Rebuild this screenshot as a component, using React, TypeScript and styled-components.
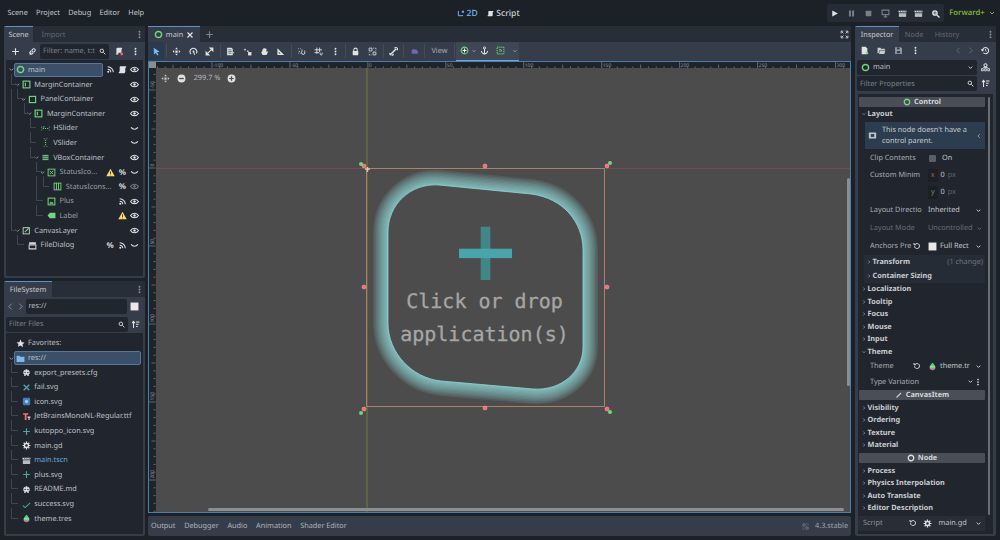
import React from 'react'
import styled, { createGlobalStyle } from 'styled-components'

const GlobalStyle = createGlobalStyle`
  html, body { margin: 0; padding: 0; background: #1c2027; }
  body { font-family: "Noto Sans", "Open Sans", sans-serif; font-size: 7.3px; color: #c6c9ce; text-rendering: geometricPrecision; }
  * { box-sizing: border-box; }
`

const TEAL = '#4aa8a8'
const GREEN = '#70d97d'
const BLUE = '#70bafa'

const ICONS: Record<string, React.ReactNode> = {
  ring: <circle cx="8" cy="8" r="5.5" strokeWidth="2.6" />,
  margin: <><rect x="2" y="2" width="12" height="12" /><path d="M6 5v6" /></>,
  panel: <rect x="2.5" y="2.5" width="11" height="11" />,
  hslider: <path d="M1 5v1m0 4v1M15 5v1m0 4v1M3 8h2m2 0h2m2 0h2M5 4v2" strokeWidth="2" />,
  vslider: <path d="M5 1h1m4 0h1M5 15h1m4 0h1M8 3v2m0 2v2m0 2v2" strokeWidth="2" />,
  vbox: <path d="M2 3h12v10H2zM2 6.5h12M2 9.5h12" fill="currentColor" stroke="#21262e" strokeWidth="1.2" />,
  center: <><rect x="2" y="2" width="12" height="12" strokeWidth="1.6" /><path d="M5 5l6 6M11 5l-6 6" strokeWidth="1.6" /></>,
  grid: <><rect x="2" y="2" width="12" height="12" strokeWidth="1.6" /><path d="M6.2 2v12M9.8 2v12" strokeWidth="1.6" /></>,
  texture: <><rect x="2" y="2" width="12" height="12" strokeWidth="1.8" /><path d="M4 12l3-4 2 2 1-1 2 3z" fill="currentColor" stroke="none" /></>,
  label: <path d="M1 8l4-5h10v10H5z" fill="currentColor" stroke="none" />,
  canvas: <><rect x="2" y="3" width="11" height="11" strokeWidth="1.5" /><path d="M5 11l8-8" stroke="#70d97d" strokeWidth="2" /></>,
  window: <><path d="M2 2h12v4H2z" fill="currentColor" stroke="none" /><path d="M2 7h12v7H2z" strokeWidth="1.8" /></>,
  eye: <><path d="M1 8c3-5.6 11-5.6 14 0-3 5.6-11 5.6-14 0z" strokeWidth="1.8" /><circle cx="8" cy="8" r="2.2" fill="currentColor" stroke="none" /></>,
  eyeOff: <path d="M2 6c3 4.5 9 4.5 12 0" strokeWidth="2" />,
  signal: <><path d="M3 3c5.5 0 10 4.500 10 10M3 7.500c3 0 5.500 2.500 5.500 5.500" strokeWidth="1.8" /><circle cx="4" cy="12" r="1.800" fill="currentColor" stroke="none" /></>,
  script: <path d="M5 2h9c1 0 1 3-1 3v6c0 3-1 3.500-3 3.500H2c-1 0-1-3 1-3V4c0-1.500 1-2 2-2z" fill="currentColor" stroke="none" />,
  warn: <><path d="M8 1.500L15.500 14.500H.5z" fill="#ffdd65" stroke="none" /><path d="M8 6v4.500M8 11.800v1.200" stroke="#21262e" strokeWidth="1.500" /></>,
  search: <><circle cx="6.500" cy="6.500" r="4" strokeWidth="2" /><path d="M10 10l4.500 4.500" strokeWidth="2.200" /></>,
  sort: <path d="M4.500 14V3M2 5.500L4.500 2.500 7 5.500M9 3.500h6M9 7.500h4.500M9 11.500h3" strokeWidth="1.800" />,
  dots: <g fill="currentColor" stroke="none"><circle cx="8" cy="3" r="1.700" /><circle cx="8" cy="8" r="1.700" /><circle cx="8" cy="13" r="1.700" /></g>,
  plus: <path d="M8 2v12M2 8h12" strokeWidth="2" />,
  close: <path d="M3 3l10 10M13 3L3 13" strokeWidth="2.400" />,
  down: <path d="M4 6l4 4 4-4" strokeWidth="2" />,
  right: <path d="M6 4l4 4-4 4" strokeWidth="2" />,
  left: <path d="M10 3L5 8l5 5" strokeWidth="1.500" />,
  fwd: <path d="M6 3l5 5-5 5" strokeWidth="1.500" />,
  link: <path d="M3 13l3-3M6 6.500L3.500 9c-1.500 2 1.500 5 3.500 3.500l2.500-2.500M10 9.500L12.500 7c1.500-2-1.500-5-3.500-3.500L6.500 6M7 9l2-2" strokeWidth="1.800" />,
  addScript: <><path d="M4 1.500h8c1 0 1 2.500-.5 2.500v6H6v3.500H2c-.8 0-.8-2 .5-2V3c0-1 .7-1.500 1.500-1.500z" fill="currentColor" stroke="none" /><circle cx="12" cy="12.500" r="2.500" fill="#ff5f5f" stroke="none" /></>,
  star: <path d="M8 1l2.200 4.600 5 .7-3.600 3.500.9 5L8 11.500l-4.500 2.300.9-5L.8 6.300l5-.7z" fill="currentColor" stroke="none" />,
  folder: <path d="M1 3h5l1.500 2H15v9H1z" fill="currentColor" stroke="none" />,
  gear: <><circle cx="8" cy="8" r="3.700" strokeWidth="2.600" /><path d="M8 1v2.500M8 12.500V15M1 8h2.500M12.500 8H15M3 3l1.800 1.800M11.200 11.200L13 13M13 3l-1.800 1.800M4.800 11.200L3 13" strokeWidth="2.200" /></>,
  clapper: <><path d="M1 3h14v3H1z" fill="currentColor" stroke="none" /><path d="M1.500 7.500h13V14h-13z" fill="currentColor" stroke="none" opacity=".8" /><path d="M4 3l1.500 3M8 3l1.500 3M12 3l1.500 3" stroke="#21262e" strokeWidth="1.200" /></>,
  robot: <><path d="M2.500 6L4 3.500l2 .8L6.700 2h2.600l.7 2.300 2-.8L13.500 6v4.500H12V14H9.500v-2h-3v2H4v-3.500H2.500z" fill="currentColor" stroke="none" /><circle cx="5.500" cy="8" r="1.300" fill="#21262e" stroke="none" /><circle cx="10.500" cy="8" r="1.300" fill="#21262e" stroke="none" /></>,
  fontFile: <><path d="M2 2h9v3H8v9H5V5H2z" fill="#ff6f6f" stroke="none" /><path d="M10 8h5v2h-1.500v4h-2v-4H10z" fill="#e0e0e0" stroke="none" /></>,
  check: <path d="M1.500 10l4 3.500L14.500 5" strokeWidth="1.800" />,
  imageBlue: <><rect x="1.500" y="1.500" width="13" height="13" rx="2" fill="#3f7fb8" stroke="none" /><circle cx="8" cy="8" r="3" fill="#9cc8ee" stroke="none" /></>,
  drop: <><path d="M8 1.500c2.500 2.500 5 5 5 8a5 5 0 0 1-10 0c0-3 2.500-5.500 5-8z" fill="#45d7a0" stroke="none" /><path d="M3.200 8h9.600l.2 1.500H3z" fill="#ffdd55" stroke="none" /><path d="M3 10.500h10l-.4 1.600H3.400z" fill="#ff6a6a" stroke="none" /><path d="M4 12.800h8l-1.500 1.500h-5z" fill="#c44eff" stroke="none" /></>,
  expand: <path d="M2 6V2h4M10 2h4v4M14 10v4h-4M6 14H2v-4M3 3l3 3M13 3l-3 3M13 13l-3-3M3 13l3-3" strokeWidth="1.500" />,
  arrow: <path d="M3 1.500l10.500 7-4.500.8 2.500 4.500-2.200 1.200-2.500-4.500L3.500 13.500z" fill="currentColor" stroke="none" />,
  move: <path d="M8 1L5.500 4h5zM8 15l-2.500-3h5zM1 8l3-2.500v5zM15 8l-3-2.500v5zM6 6h4v4H6z" fill="currentColor" stroke="none" />,
  rotate: <><path d="M3.500 12.500A6 6 0 1 1 13 11.500" strokeWidth="1.900" /><circle cx="8" cy="8" r="1.800" fill="currentColor" stroke="none" /><path d="M8 8l2 6" strokeWidth="1.800" /></>,
  scale: <path d="M9 2h5v5zM2 14V9l5 5zM11 5L5 11" fill="currentColor" strokeWidth="1.800" />,
  listDoc: <><path d="M2 1.500h8L12 3.500v11H2z" fill="currentColor" stroke="none" /><path d="M4 5h6M4 8h6M4 11h6" stroke="#363d4a" strokeWidth="1.200" /><path d="M12 8l3 3h-3z" fill="currentColor" stroke="none" /></>,
  pivot: <><path d="M2 3h3v3H2zM7 6h3v3H7z" fill="currentColor" stroke="none" opacity=".8" /><path d="M9 9h6v6H9z" fill="currentColor" stroke="none" /></>,
  hand: <path d="M4 8V4.500h1.500V7V2.800H7.500V7V2H9.500v5V3.200H11.500v6L13 7.500 14.500 8.500 11.500 14H4.500L2 9.500 3 8.500z" fill="currentColor" stroke="none" />,
  ruler: <path d="M2.500 2v12h12zM5 8.500V11.500h3z" fill="currentColor" fillRule="evenodd" stroke="none" />,
  magnet: <path d="M2 3h1M6 3h1M9 4.500c0 3-1 5-1 6 0 3.500 6 3.500 6 0 0-1.500-.5-3-.5-4M4 7v2M2 11h1M6 11h1" strokeWidth="1.700" />,
  gridSnap: <path d="M5 1v11M10 1v8M1 5h13M1 10h8M11 10v2c0 3 3.500 3 3.500 0v-2" strokeWidth="1.600" />,
  lock: <><rect x="3" y="7" width="10" height="7.500" rx="1" fill="currentColor" stroke="none" /><path d="M5 7V5a3 3 0 0 1 6 0v2" strokeWidth="1.900" /></>,
  group: <path d="M2 2h5v5H2zM9 9h5v5H9zM9 2h2m2 0h1v2M14 6v1M2 9v1M2 13v1h2M6 14h1" strokeWidth="1.500" />,
  bone: <path d="M3 13l10-10M2 11c-1 2 1 3 1.500 2.500M5 14c2 1 2.500-1 2-1.500M11 2c-1-1 2-1.500 2.500-.500M14 5c1 0 1.500-2.500.5-3" strokeWidth="2.600" />,
  blob: <path d="M3 6l3-3 2 2 3-1 3 4v4H3z" fill="currentColor" stroke="none" />,
  addNode: <><circle cx="8" cy="8" r="6" strokeWidth="1.900" /><path d="M8 4.500v7M4.500 8h7" stroke="#fff" strokeWidth="1.700" /></>,
  zoomOut: <><circle cx="8" cy="8" r="7" fill="currentColor" stroke="none" /><path d="M4 8h8" stroke="#4c4c4c" strokeWidth="2.400" /></>,
  zoomIn: <><circle cx="8" cy="8" r="7" fill="currentColor" stroke="none" /><path d="M4 8h8M8 4v8" stroke="#4c4c4c" strokeWidth="2.200" /></>,
  anchor: <><circle cx="8" cy="3.500" r="2" strokeWidth="1.600" /><path d="M8 5v9M2.500 9c0 3 3 5 5.500 5s5.500-2 5.500-5" strokeWidth="1.800" /></>,
  layout: <path d="M2 2h12v12H2zM6.500 6.500h3v3h-3z" strokeWidth="1.700" strokeDasharray="2.500 1.200" />,
  mode2d: <path d="M3 3v10h10M13 13v-1.500M3 3h1.500M12 2.500h3v3h-3z" strokeWidth="2.200" />,
  play: <path d="M4 2.500l10 5.500-10 5.500z" fill="currentColor" stroke="none" />,
  pause: <path d="M3.500 2.500h3.500v11H3.500zM9 2.500h3.500v11H9z" fill="currentColor" stroke="none" />,
  stop: <rect x="3" y="3" width="10" height="10" rx="1" fill="currentColor" stroke="none" />,
  remote: <path d="M2 2h12v8H2zM8 10v4M5 14h6" strokeWidth="2" />,
  movieMag: <><circle cx="7" cy="7" r="5" fill="currentColor" stroke="none" /><path d="M10.500 10.500L15 15" strokeWidth="2.400" /><path d="M4 7h6M7 4v6" stroke="#262c36" strokeWidth="1.100" /></>,
  history: <><path d="M4 12a5.500 5.500 0 1 0-1.500-4M.5 6L2.500 8.500 5 6.500" strokeWidth="1.800" /><path d="M8 5v3.500l2 1" strokeWidth="1.500" /></>,
  undo: <path d="M4.500 4.500A5 5 0 1 1 3 8.500M2 2v3.500h3.500" strokeWidth="2" />,
  newRes: <><path d="M3 1.500h7l3 3v10H3z" fill="currentColor" stroke="none" /><circle cx="12.500" cy="12.500" r="2.300" fill="#70d97d" stroke="none" /></>,
  openFolder: <path d="M1 3h5l1.500 2H14v2H5L3 13H1zM5.500 8H15l-2 6H3.500z" fill="currentColor" stroke="none" />,
  save: <><path d="M2 2h10l2 2v10H2z" fill="currentColor" stroke="none" /><path d="M5 2.500h5v3.500H5zM5 9h6v4H5z" fill="#363d4a" stroke="none" /></>,
  pinNode: <><circle cx="8" cy="4" r="2.800" strokeWidth="1.800" /><path d="M1 10h3v4H1zM6.500 10h3v4h-3zM12 10h3v4h-3zM4 8h8" strokeWidth="1.500" /></>,
  infoNode: <><rect x="1.500" y="2.500" width="13" height="11" rx="1.500" fill="#c0c4ca" stroke="none" /><rect x="5" y="5.500" width="6" height="5" fill="#2c3e50" stroke="none" /></>,
  pencil: <path d="M3 13l9-9" strokeWidth="2.600" />,
  swatch: <rect x="1" y="1" width="14" height="14" fill="#e8e8e8" stroke="none" />,
}

const IconSvg = styled.svg<{ $size: number; $color: string; $dim?: boolean }>`
  width: ${p => p.$size}px;
  height: ${p => p.$size}px;
  flex: none;
  color: ${p => p.$color};
  opacity: ${p => (p.$dim ? 0.45 : 1)};
  fill: none;
  stroke: currentColor;
  stroke-width: 2;
`

const Icon = ({ name, size = 9, color = '#e0e2e5', dim }: { name: string; size?: number; color?: string; dim?: boolean }) => (
  <IconSvg viewBox="0 0 16 16" $size={size} $color={color} $dim={dim}>
    {ICONS[name]}
  </IconSvg>
)

const Root = styled.div`
  width: 1000px;
  height: 540px;
  overflow: hidden;
  display: flex;
  flex-direction: column;
  background: #1c2027;
`

const MenuBar = styled.div`
  height: 26px;
  flex: none;
  display: flex;
  align-items: center;
  padding: 0 4px;
`

const MenuItems = styled.div`
  display: flex;
  width: 432px;
  gap: 8.300px;
  padding-left: 3.500px;
`

const ModeSwitch = styled.div`
  display: flex;
  align-items: center;
  gap: 9px;
  width: 364px;
  padding-left: 21px;
`

const Mode = styled.span<{ $active?: boolean }>`
  display: flex;
  align-items: center;
  gap: 2.500px;
  font-size: 8.600px;
  font-weight: 500;
  color: ${p => (p.$active ? BLUE : '#d0d3d7')};
`

const PlayGroup = styled.div`
  display: flex;
  align-items: center;
  height: 18px;
  background: #262c36;
  border-radius: 2px;
  margin-left: 26.600px;
`

const Renderer = styled.span`
  display: flex;
  align-items: center;
  gap: 3px;
  margin-left: 5px;
  font-size: 7.700px;
  color: #7fb02e;
  font-weight: 600;
`

const Workspace = styled.div`
  height: 510px;
  flex: none;
  display: flex;
  padding: 0 4px;
`

const Dock = styled.div`
  width: 141px;
  flex: none;
  display: flex;
  flex-direction: column;
  gap: 3px;
`

const Panel = styled.section<{ $height: number }>`
  height: ${p => p.$height}px;
  flex: none;
  display: flex;
  flex-direction: column;
  background: #363d4a;
  border-radius: 2px;
  overflow: hidden;
`

const TabBar = styled.div`
  height: 16px;
  flex: none;
  display: flex;
  align-items: stretch;
  background: #282e38;
  padding-right: 1px;
`

const Tab = styled.div<{ $active?: boolean; $width: number }>`
  width: ${p => p.$width}px;
  flex: none;
  display: flex;
  align-items: center;
  justify-content: center;
  gap: 3px;
  color: ${p => (p.$active ? '#c6c9ce' : '#626874')};
  background: ${p => (p.$active ? '#363d4a' : 'transparent')};
  border-top: 1px solid ${p => (p.$active ? '#5d93c4' : 'transparent')};
`

const PushRight = styled.div`
  margin-left: auto;
  display: flex;
  align-items: center;
`

const ToolRow = styled.div<{ $height?: number; $gap?: number; $pad?: number }>`
  height: ${p => p.$height ?? 18}px;
  flex: none;
  display: flex;
  align-items: center;
  gap: ${p => p.$gap ?? 0}px;
  padding: 0 ${p => p.$pad ?? 2}px;
`

const IconSlot = styled.span<{ $width?: number }>`
  width: ${p => p.$width ?? 17}px;
  flex: none;
  display: flex;
  align-items: center;
  justify-content: center;
`

const Field = styled.div<{ $width: number; $dim?: boolean }>`
  width: ${p => p.$width}px;
  height: 15px;
  flex: none;
  display: flex;
  align-items: center;
  justify-content: space-between;
  padding: 0 3px;
  background: #21262e;
  border-radius: 2px;
  color: ${p => (p.$dim ? '#7c828c' : '#b9bcc2')};
  overflow: hidden;
  white-space: nowrap;
`

const TreeBox = styled.div<{ $top: number }>`
  flex: 1;
  margin: 0 2px 2px;
  padding-top: ${p => p.$top}px;
  background: #21262e;
  border-radius: 1px;
  overflow: hidden;
`

const Row = styled.div<{ $depth: number; $up: number }>`
  position: relative;
  height: 14.600px;
  display: flex;
  align-items: center;
  padding-left: ${p => 1 + p.$depth * 6.3}px;

  &::before {
    content: '';
    display: ${p => (p.$up ? 'block' : 'none')};
    position: absolute;
    left: ${p => 5 + (p.$depth - 1) * 6.3}px;
    bottom: 7.300px;
    width: 5.500px;
    height: ${p => p.$up * 14.6 - 5}px;
    border-left: 1px solid #3f4651;
    border-bottom: 1px solid #3f4651;
  }
`

const Arrow = styled.span`
  width: 8px;
  flex: none;
  display: flex;
  justify-content: center;
`

const NameCell = styled.div<{ $selected?: boolean; $width?: number }>`
  width: ${p => (p.$width ? `${p.$width}px` : 'auto')};
  height: 14px;
  display: flex;
  align-items: center;
  gap: 3.500px;
  padding-left: 0.500px;
  white-space: nowrap;
  ${p => p.$selected && 'background: #3a5068; border: 1px solid #587896; border-radius: 2px; margin-left: -1px;'}
`

const NodeName = styled.span<{ $dim?: boolean; $link?: boolean }>`
  color: ${p => (p.$link ? '#6fa9de' : p.$dim ? '#9a9ea5' : '#bcc0c6')};
`

const RowIcons = styled.div`
  margin-left: auto;
  display: flex;
  align-items: center;
  gap: 3.200px;
  padding-right: 4px;
`

const Percent = styled.span`
  width: 9px;
  text-align: center;
  font-size: 8px;
  font-weight: 700;
  color: #d8dade;
`

const Center = styled.div`
  width: 703px;
  flex: none;
  margin: 0 4px 0 3px;
  display: flex;
  flex-direction: column;
`

const ToolBtn = styled.span<{ $active?: boolean; $width?: number }>`
  width: ${p => p.$width ?? 16.7}px;
  height: 18px;
  flex: none;
  display: flex;
  align-items: center;
  justify-content: center;
  border-radius: 2px;
  ${p => p.$active && 'background: #2a3b4d;'}
`

const Sep = styled.span`
  width: 1px;
  height: 14px;
  flex: none;
  margin: 0 1.600px;
  background: #454c59;
`

const ViewLabel = styled.span`
  width: 25px;
  flex: none;
  text-align: center;
  color: #a9adb3;
`

const SnapGroup = styled.div`
  height: 100%;
  display: flex;
  align-items: center;
  padding-left: 3px;
  background: #3f4654;
  border-bottom: 1px solid #6aa6da;
`

const EditorToolbar = styled.div`
  height: 18.500px;
  flex: none;
  display: flex;
  align-items: center;
  background: #363d4a;
`

const CanvasFrame = styled.div`
  flex: 1;
  min-height: 0;
  display: grid;
  grid-template-columns: 6.500px 1fr;
  grid-template-rows: 6.500px 1fr;
  border: 1px solid #4b80ad;
  background: #1f242b;
`

const Corner = styled.div`
  background: #8a8e94;
`

const RulerSvg = styled.svg`
  display: block;
  width: 100%;
  height: 100%;
`

const RulerText = styled.text`
  font-size: 5px;
  fill: #8f939a;
`

const Stage = styled.div`
  position: relative;
  background: #4c4c4c;
  overflow: hidden;
`

const StageSvg = styled.svg`
  position: absolute;
  left: 0;
  top: 0;
  width: 695px;
  height: 444px;
`

const ZoomControls = styled.div`
  position: absolute;
  left: 4px;
  top: 5px;
  display: flex;
  align-items: center;
  color: #b6b8bb;
`

const ZoomValue = styled.span`
  width: 31px;
  text-align: center;
`

const DropText = styled.div`
  position: absolute;
  left: 0;
  top: 216.500px;
  width: 658px;
  text-align: center;
  font-family: "DejaVu Sans Mono", "Liberation Mono", monospace;
  font-size: 20px;
  line-height: 33px;
  color: #a6a6a6;
  -webkit-text-stroke: 0.3px #a6a6a6;
`

const ScrollV = styled.div`
  position: absolute;
  right: 0;
  top: 110px;
  width: 3px;
  height: 208px;
  background: #8b8e92;
  border-radius: 2px;
`

const ScrollH = styled.div`
  position: absolute;
  left: 52px;
  right: 6px;
  bottom: 1px;
  height: 3px;
  background: #8b8e92;
  border-radius: 2px;
`

const BottomBar = styled.div`
  height: 20px;
  flex: none;
  margin-top: 3px;
  display: flex;
  align-items: center;
  gap: 8.700px;
  padding: 0 3px;
  background: #363d4a;
  border-radius: 2px;
  color: #b0b4ba;
`

const Version = styled.span`
  margin-left: auto;
  display: flex;
  align-items: center;
  gap: 6px;
  color: #a0a4aa;
`

const Inspector = styled.div`
  flex: 1;
  min-height: 0;
  position: relative;
  margin: 2px 3px 2px;
  padding: 2.500px 8px 0 1px;
  background: #21262e;
`

const Thumb = styled.div`
  position: absolute;
  right: 3px;
  top: 3px;
  width: 2.500px;
  height: 418px;
  border-radius: 1px;
  background: #6a6e75;
`

const Category = styled.div<{ $top?: number }>`
  height: 10px;
  margin-top: ${p => p.$top ?? 0}px;
  margin-bottom: 1.300px;
  display: flex;
  align-items: center;
  justify-content: center;
  gap: 3px;
  background: #494e57;
  font-weight: 700;
  color: #d4d6da;
  border-radius: 1px;
`

const Section = styled.div<{ $nested?: boolean; $height?: number }>`
  height: ${p => p.$height ?? 12.5}px;
  display: flex;
  align-items: center;
  gap: 0.500px;
  padding-left: 2px;
  padding-right: 2px;
  font-weight: 700;
  color: #c9ccd1;
  ${p => p.$nested && 'background: #262c35; margin-left: 5px;'}
`

const ChangeNote = styled.span`
  margin-left: auto;
  font-weight: 400;
  color: #6f747d;
`

const InfoBox = styled.div`
  height: 27px;
  margin: 1.500px 0 0 6px;
  display: flex;
  align-items: center;
  gap: 5px;
  padding: 0 3px 0 3px;
  background: #2b3d4f;
  color: #c9ccd1;
  line-height: 11px;
`

const Prop = styled.div<{ $height: number; $dim?: boolean }>`
  height: ${p => p.$height}px;
  display: grid;
  grid-template-columns: 58px 1fr;
  align-items: center;
  padding-left: 11px;
  color: ${p => (p.$dim ? '#686d76' : '#a9adb3')};
  white-space: nowrap;
`

const PropLabel = styled.div`
  display: flex;
  align-items: center;
  justify-content: space-between;
  padding-right: 7px;
  overflow: hidden;
`

const PropValue = styled.div<{ $dim?: boolean }>`
  display: flex;
  align-items: center;
  gap: 3px;
  padding-right: 3px;
  color: ${p => (p.$dim ? '#686d76' : '#c3c6cb')};
`

const PushEnd = styled.span`
  margin-left: auto;
  display: flex;
`

const Checkbox = styled.span`
  width: 7px;
  height: 7px;
  background: #5a5f68;
  border-radius: 1px;
  margin: 0 3px 0 1px;
`

const AxisTag = styled.span<{ $color: string }>`
  width: 9.500px;
  height: 13px;
  display: flex;
  align-items: center;
  justify-content: center;
  background: #1b1f26;
  color: ${p => p.$color};
`

const Unit = styled.span`
  color: #5d626b;
`

const ScriptRow = styled.div`
  position: absolute;
  left: 0;
  right: 8px;
  bottom: 3.500px;
  height: 15px;
  display: flex;
  align-items: center;
  padding-left: 5px;
  background: #282d36;
  color: #8e9299;
`

const ScriptValue = styled.div`
  margin-left: 26px;
  display: flex;
  align-items: center;
  gap: 3px;
  flex: 1;
  padding-right: 3px;
  color: #c3c6cb;
`

type TreeNode = {
  name: string
  depth: number
  up: number
  icon: string
  color?: string
  open?: boolean
  dim?: boolean
  badges: string[]
}

const SCENE_TREE: TreeNode[] = [
  { name: 'MarginContainer', depth: 1, up: 1, icon: 'margin', open: true, badges: ['eye'] },
  { name: 'PanelContainer', depth: 2, up: 1, icon: 'panel', open: true, badges: ['eye'] },
  { name: 'MarginContainer', depth: 3, up: 1, icon: 'margin', open: true, badges: ['eye'] },
  { name: 'HSlider', depth: 4, up: 1, icon: 'hslider', badges: ['eyeOff'] },
  { name: 'VSlider', depth: 4, up: 1, icon: 'vslider', badges: ['eyeOff'] },
  { name: 'VBoxContainer', depth: 4, up: 1, icon: 'vbox', open: true, badges: ['eye'] },
  { name: 'StatusIco...', depth: 5, up: 1, icon: 'center', open: true, dim: true, badges: ['warn', '%', 'eyeOff'] },
  { name: 'StatusIcons...', depth: 6, up: 1, icon: 'grid', dim: true, badges: ['%', 'eyeDim'] },
  { name: 'Plus', depth: 5, up: 2, icon: 'texture', dim: true, badges: ['signal', 'eye'] },
  { name: 'Label', depth: 5, up: 1, icon: 'label', dim: true, badges: ['warn', 'eye'] },
  { name: 'CanvasLayer', depth: 1, up: 10, icon: 'canvas', color: '#d8dade', open: true, badges: ['eye'] },
  { name: 'FileDialog', depth: 2, up: 1, icon: 'window', color: '#d8dade', badges: ['%', 'signal', 'eyeOff'] },
]

const FILES: { name: string; icon: string; color?: string; link?: boolean }[] = [
  { name: 'export_presets.cfg', icon: 'robot' },
  { name: 'fail.svg', icon: 'close', color: TEAL },
  { name: 'icon.svg', icon: 'imageBlue' },
  { name: 'JetBrainsMonoNL-Regular.ttf', icon: 'fontFile' },
  { name: 'kutoppo_icon.svg', icon: 'plus', color: TEAL },
  { name: 'main.gd', icon: 'gear' },
  { name: 'main.tscn', icon: 'clapper', link: true },
  { name: 'plus.svg', icon: 'plus', color: TEAL },
  { name: 'README.md', icon: 'robot' },
  { name: 'success.svg', icon: 'check', color: TEAL },
  { name: 'theme.tres', icon: 'drop' },
]

const Badge = ({ kind }: { kind: string }) => {
  if (kind === '%') return <Percent>%</Percent>
  if (kind === 'eyeDim') return <Icon name="eye" dim />
  return <Icon name={kind} />
}

const TOOL_GROUPS = [
  ['move', 'rotate', 'scale'],
  ['listDoc', 'pivot', 'hand', 'ruler'],
  ['magnet', 'gridSnap', 'dots'],
  ['lock', 'group'],
  ['bone'],
]

const PLAY_BUTTONS: { name: string; dim?: boolean }[] = [
  { name: 'play' },
  { name: 'pause', dim: true },
  { name: 'stop', dim: true },
  { name: 'remote', dim: true },
  { name: 'clapper' },
  { name: 'clapper' },
  { name: 'movieMag' },
]

const HORIZONTAL_TICKS = Array.from({ length: 90 }, (_, i) => i)
const RULER_LABELS = [-100, -50, 0, 50, 100, 150, 200, 250, 300]
const VERTICAL_LABELS = [-50, 0, 50, 100, 150, 200]

const HorizontalRuler = () => (
  <RulerSvg viewBox="155 61.500 695 6.500" preserveAspectRatio="none">
    {HORIZONTAL_TICKS.map(i => {
      const x = 211 + (i - 8) * 7.8
      const major = i % 10 === 8
      const mid = i % 5 === 3
      return <line key={i} x1={x} x2={x} y1={major ? 61.5 : mid ? 64 : 66} y2={68} stroke="#7f848b" strokeWidth="0.7" />
    })}
    {RULER_LABELS.map((v, i) => (
      <RulerText key={v} x={212 + i * 78} y={66}>
        {v}
      </RulerText>
    ))}
  </RulerSvg>
)

const VerticalRuler = () => (
  <RulerSvg viewBox="148.500 68 6.500 444" preserveAspectRatio="none">
    {HORIZONTAL_TICKS.slice(0, 60).map(i => {
      const y = 90 + (i - 3) * 7.8
      const major = i % 10 === 3
      const mid = i % 5 === 3
      return <line key={i} y1={y} y2={y} x1={major ? 148.5 : mid ? 151 : 153} x2={155} stroke="#7f848b" strokeWidth="0.7" />
    })}
    {VERTICAL_LABELS.map((v, i) => (
      <RulerText key={v} transform={`translate(153 ${88.5 + i * 78}) rotate(-90)`}>
        {v}
      </RulerText>
    ))}
  </RulerSvg>
)

const BLOB =
  'M438 185 L530 194 C562 198 582 222 582 250 L582 347 C582 372 560 391 532 389 L440 381 C411 378 387 353 387 323 L387 232 C387 204 410 183 438 185 Z'
// more strokes close to the edge, so the glow falls off instead of looking like a band
const GLOW_STEPS = Array.from({ length: 14 }, (_, i) => 30 * Math.pow((i + 1) / 14, 1.4))
const HANDLES = [
  [363, 166], [484, 166], [606, 166], [363, 287], [606, 287], [363, 409], [484, 408], [606, 409],
]
const ANCHORS = [
  [360, 164], [609, 163], [360, 413], [609, 412],
]

const CanvasDrawing = () => (
  <StageSvg viewBox="155 68 695 444">
    <line x1="155" x2="850" y1="168.500" y2="168.500" stroke="#7d4a4e" strokeWidth="0.8" />
    <line x1="366" x2="366" y1="68" y2="512" stroke="#6f7d33" strokeWidth="1" />
    {GLOW_STEPS.map(w => (
      <path key={w} d={BLOB} fill="none" stroke="#8fdcdc" strokeOpacity="0.11" strokeWidth={w} strokeLinejoin="round" />
    ))}
    <path d={BLOB} fill="#4c4c4c" stroke="#8ed6d6" strokeWidth="0.8" />
    <rect x="479.700" y="226.700" width="9.600" height="53.300" fill="#3f8789" />
    <rect x="458" y="248.700" width="53" height="9.400" fill="#48a6aa" />
    <rect x="365.500" y="168.500" width="238" height="238" fill="none" stroke="#b47d66" strokeWidth="1" />
    {HANDLES.map(([x, y]) => (
      <circle key={`${x}-${y}`} cx={x} cy={y} r="2" fill="#ff6b70" stroke="#f0b5b0" strokeWidth="0.5" />
    ))}
    {ANCHORS.map(([x, y]) => (
      <circle key={`${x}-${y}`} cx={x} cy={y} r="2" fill={GREEN} />
    ))}
    <path d="M364 169h5M366.500 167v5" stroke="#e8b9ae" strokeWidth="1.500" />
  </StageSvg>
)

const App = () => (
  <Root>
    <GlobalStyle />
    <MenuBar>
      <MenuItems>
        {['Scene', 'Project', 'Debug', 'Editor', 'Help'].map(m => (
          <span key={m}>{m}</span>
        ))}
      </MenuItems>
      <ModeSwitch>
        <Mode $active>
          <Icon name="mode2d" color={BLUE} size={7} />
          2D
        </Mode>
        <Mode>
          <Icon name="script" size={7} />
          Script
        </Mode>
      </ModeSwitch>
      <PlayGroup>
        {PLAY_BUTTONS.map((b, i) => (
          <IconSlot key={i} $width={16.8}>
            <Icon name={b.name} dim={b.dim} />
          </IconSlot>
        ))}
      </PlayGroup>
      <Renderer>
        Forward+
        <Icon name="down" color="#7fb02e" size={8} />
      </Renderer>
    </MenuBar>

    <Workspace>
      <Dock>
        <Panel $height={252}>
          <TabBar>
            <Tab $active $width={29}>Scene</Tab>
            <Tab $width={41}>Import</Tab>
            <PushRight>
              <Icon name="dots" color="#8a8f97" />
            </PushRight>
          </TabBar>
          <ToolRow>
            <IconSlot $width={18}>
              <Icon name="plus" />
            </IconSlot>
            <IconSlot $width={16}>
              <Icon name="link" />
            </IconSlot>
            <Field $width={69} $dim>
              Filter: name, t:t
              <Icon name="search" size={7} />
            </Field>
            <IconSlot $width={20}>
              <Icon name="addScript" />
            </IconSlot>
            <IconSlot $width={13}>
              <Icon name="dots" />
            </IconSlot>
          </ToolRow>
          <TreeBox $top={2.7}>
            <Row $depth={0} $up={0}>
              <Arrow>
                <Icon name="down" size={7} color="#9a9ea5" />
              </Arrow>
              <NameCell $selected $width={89}>
                <Icon name="ring" color={GREEN} />
                <NodeName>main</NodeName>
              </NameCell>
              <RowIcons>
                <Icon name="signal" />
                <Icon name="script" />
                <Icon name="eye" />
              </RowIcons>
            </Row>
            {SCENE_TREE.map((n, i) => (
              <Row key={i} $depth={n.depth} $up={n.up}>
                <Arrow>{n.open && <Icon name="down" size={7} color="#9a9ea5" />}</Arrow>
                <NameCell>
                  <Icon name={n.icon} color={n.color ?? GREEN} />
                  <NodeName $dim={n.dim}>{n.name}</NodeName>
                </NameCell>
                <RowIcons>
                  {n.badges.map((b, j) => (
                    <Badge key={j} kind={b} />
                  ))}
                </RowIcons>
              </Row>
            ))}
          </TreeBox>
        </Panel>

        <Panel $height={255}>
          <TabBar>
            <Tab $active $width={48}>FileSystem</Tab>
            <PushRight>
              <Icon name="dots" color="#8a8f97" />
            </PushRight>
          </TabBar>
          <ToolRow $pad={1}>
            <IconSlot $width={10.500}>
              <Icon name="left" color="#9a9ea5" />
            </IconSlot>
            <IconSlot $width={10}>
              <Icon name="fwd" color="#9a9ea5" />
            </IconSlot>
            <Field $width={101}>res://</Field>
            <IconSlot $width={15}>
              <Icon name="swatch" />
            </IconSlot>
          </ToolRow>
          <ToolRow $height={18} $pad={2}>
            <Field $width={122} $dim>
              Filter Files
              <Icon name="search" size={7} />
            </Field>
            <IconSlot $width={15}>
              <Icon name="sort" />
            </IconSlot>
          </ToolRow>
          <TreeBox $top={3.2}>
            <Row $depth={0} $up={0}>
              <Arrow />
              <NameCell>
                <Icon name="star" />
                <NodeName>Favorites:</NodeName>
              </NameCell>
            </Row>
            <Row $depth={0} $up={0}>
              <Arrow>
                <Icon name="down" size={7} color="#9a9ea5" />
              </Arrow>
              <NameCell $selected $width={127}>
                <Icon name="folder" color="#7fb8ea" />
                <NodeName>res://</NodeName>
              </NameCell>
            </Row>
            {FILES.map(f => (
              <Row key={f.name} $depth={1} $up={1}>
                <Arrow />
                <NameCell>
                  <Icon name={f.icon} color={f.color} />
                  <NodeName $link={f.link}>{f.name}</NodeName>
                </NameCell>
              </Row>
            ))}
          </TreeBox>
        </Panel>
      </Dock>

      <Center>
        <TabBar>
          <Tab $active $width={52}>
            <Icon name="ring" color={GREEN} />
            main
            <Icon name="close" size={8} />
          </Tab>
          <IconSlot $width={18}>
            <Icon name="plus" color="#7d838d" />
          </IconSlot>
          <PushRight>
            <IconSlot $width={12}>
              <Icon name="expand" />
            </IconSlot>
          </PushRight>
        </TabBar>
        <EditorToolbar>
          <ToolBtn $active $width={16}>
            <Icon name="arrow" color={BLUE} />
          </ToolBtn>
          {TOOL_GROUPS.map((group, i) => (
            <React.Fragment key={i}>
              <Sep />
              {group.map(name => (
                <ToolBtn key={name}>
                  <Icon name={name} />
                </ToolBtn>
              ))}
            </React.Fragment>
          ))}
          <Sep />
          <ToolBtn>
            <Icon name="blob" color="#6d6ab0" />
          </ToolBtn>
          <Sep />
          <ViewLabel>View</ViewLabel>
          <Sep />
          <SnapGroup>
            <IconSlot $width={11}>
              <Icon name="addNode" color={GREEN} />
            </IconSlot>
            <IconSlot $width={7}>
              <Icon name="down" size={6} color="#b0b4ba" />
            </IconSlot>
            <IconSlot $width={14}>
              <Icon name="anchor" />
            </IconSlot>
            <IconSlot $width={19}>
              <Icon name="layout" color={GREEN} />
            </IconSlot>
            <IconSlot $width={9}>
              <Icon name="down" size={6} color="#b0b4ba" />
            </IconSlot>
          </SnapGroup>
        </EditorToolbar>
        <CanvasFrame>
          <Corner />
          <HorizontalRuler />
          <VerticalRuler />
          <Stage>
            <CanvasDrawing />
            <ZoomControls>
              <IconSlot $width={12}>
                <Icon name="move" color="#c4c6c9" />
              </IconSlot>
              <IconSlot $width={20}>
                <Icon name="zoomOut" color="#e0e0e0" />
              </IconSlot>
              <ZoomValue>299.7 %</ZoomValue>
              <IconSlot $width={17}>
                <Icon name="zoomIn" color="#e0e0e0" />
              </IconSlot>
            </ZoomControls>
            <DropText>
              Click or drop
              <br />
              application(s)
            </DropText>
            <ScrollV />
            <ScrollH />
          </Stage>
        </CanvasFrame>
        <BottomBar>
          {['Output', 'Debugger', 'Audio', 'Animation', 'Shader Editor'].map(t => (
            <span key={t}>{t}</span>
          ))}
          <Version>
            <Icon name="group" size={7} dim />
            4.3.stable
          </Version>
        </BottomBar>
      </Center>

      <Dock>
        <Panel $height={510}>
          <TabBar>
            <Tab $active $width={44}>Inspector</Tab>
            <Tab $width={30}>Node</Tab>
            <Tab $width={36}>History</Tab>
            <PushRight>
              <Icon name="dots" color="#8a8f97" />
            </PushRight>
          </TabBar>
          <ToolRow $height={17} $pad={1}>
            <IconSlot>
              <Icon name="newRes" />
            </IconSlot>
            <IconSlot>
              <Icon name="openFolder" color="#c8cbd0" />
            </IconSlot>
            <IconSlot>
              <Icon name="save" color="#9a9ea5" />
            </IconSlot>
            <IconSlot>
              <Icon name="dots" />
            </IconSlot>
            <PushRight>
              <IconSlot $width={12}>
                <Icon name="left" color="#6c717a" />
              </IconSlot>
              <IconSlot $width={12}>
                <Icon name="fwd" color="#6c717a" />
              </IconSlot>
              <IconSlot $width={19}>
                <Icon name="history" />
              </IconSlot>
            </PushRight>
          </ToolRow>
          <ToolRow $height={16.500} $pad={2}>
            <Field $width={120}>
              <NameCell>
                <Icon name="ring" color={GREEN} />
                main
              </NameCell>
              <Icon name="down" size={7} />
            </Field>
            <IconSlot $width={17}>
              <Icon name="pinNode" />
            </IconSlot>
          </ToolRow>
          <ToolRow $height={16.500} $pad={2}>
            <Field $width={120} $dim>
              Filter Properties
              <Icon name="search" size={7} />
            </Field>
            <IconSlot $width={17}>
              <Icon name="sort" />
            </IconSlot>
          </ToolRow>
          <Inspector>
            <Thumb />
            <Category>
              <Icon name="ring" color={GREEN} size={8} />
              Control
            </Category>
            <Section $height={13}>
              <Icon name="down" size={6} color="#9a9ea5" />
              Layout
            </Section>
            <InfoBox>
              <Icon name="infoNode" />
              <span>
                This node doesn't have a
                <br />
                control parent.
              </span>
              <PushEnd>
                <Icon name="left" size={6} />
              </PushEnd>
            </InfoBox>
            <Prop $height={18}>
              <PropLabel>Clip Contents</PropLabel>
              <PropValue>
                <Checkbox />
                On
              </PropValue>
            </Prop>
            <Prop $height={16}>
              <PropLabel>Custom Minim</PropLabel>
              <PropValue>
                <AxisTag $color="#a05a50">x</AxisTag>
                0 <Unit>px</Unit>
              </PropValue>
            </Prop>
            <Prop $height={18}>
              <PropLabel />
              <PropValue>
                <AxisTag $color="#5f9a5f">y</AxisTag>
                0 <Unit>px</Unit>
              </PropValue>
            </Prop>
            <Prop $height={18}>
              <PropLabel>Layout Directio</PropLabel>
              <PropValue>
                Inherited
                <PushEnd>
                  <Icon name="down" size={7} />
                </PushEnd>
              </PropValue>
            </Prop>
            <Prop $height={18} $dim>
              <PropLabel>Layout Mode</PropLabel>
              <PropValue $dim>
                Uncontrolled
                <PushEnd>
                  <Icon name="down" size={7} color="#686d76" />
                </PushEnd>
              </PropValue>
            </Prop>
            <Prop $height={17.500}>
              <PropLabel>
                Anchors Pre
                <Icon name="undo" size={8} />
              </PropLabel>
              <PropValue>
                <Icon name="swatch" />
                Full Rect
                <PushEnd>
                  <Icon name="down" size={7} />
                </PushEnd>
              </PropValue>
            </Prop>
            <Section $nested $height={14}>
              <Icon name="right" size={6} color="#9a9ea5" />
              Transform
              <ChangeNote>(1 change)</ChangeNote>
            </Section>
            <Section $nested $height={14}>
              <Icon name="right" size={6} color="#9a9ea5" />
              Container Sizing
            </Section>
            {['Localization', 'Tooltip', 'Focus', 'Mouse', 'Input'].map(s => (
              <Section key={s}>
                <Icon name="right" size={6} color="#9a9ea5" />
                {s}
              </Section>
            ))}
            <Section>
              <Icon name="down" size={6} color="#9a9ea5" />
              Theme
            </Section>
            <Prop $height={17}>
              <PropLabel>
                Theme
                <Icon name="undo" size={8} />
              </PropLabel>
              <PropValue>
                <Icon name="drop" />
                theme.tr
                <PushEnd>
                  <Icon name="down" size={7} />
                </PushEnd>
              </PropValue>
            </Prop>
            <Prop $height={15}>
              <PropLabel>Type Variation</PropLabel>
              <PropValue>
                <PushEnd>
                  <Icon name="down" size={7} />
                  <Icon name="dots" size={8} />
                </PushEnd>
              </PropValue>
            </Prop>
            <Category $top={0.5}>
              <Icon name="pencil" color="#c6c9ce" size={8} />
              CanvasItem
            </Category>
            {['Visibility', 'Ordering', 'Texture', 'Material'].map(s => (
              <Section key={s}>
                <Icon name="right" size={6} color="#9a9ea5" />
                {s}
              </Section>
            ))}
            <Category $top={1.5}>
              <Icon name="ring" color="#e0e0e0" size={8} />
              Node
            </Category>
            {['Process', 'Physics Interpolation', 'Auto Translate', 'Editor Description'].map(s => (
              <Section key={s}>
                <Icon name="right" size={6} color="#9a9ea5" />
                {s}
              </Section>
            ))}
            <ScriptRow>
              Script
              <ScriptValue>
                <Icon name="undo" size={8} />
                <IconSlot $width={16}>
                  <Icon name="gear" />
                </IconSlot>
                main.gd
                <PushEnd>
                  <Icon name="down" size={7} />
                </PushEnd>
              </ScriptValue>
            </ScriptRow>
          </Inspector>
        </Panel>
      </Dock>
    </Workspace>
  </Root>
)

export default App
